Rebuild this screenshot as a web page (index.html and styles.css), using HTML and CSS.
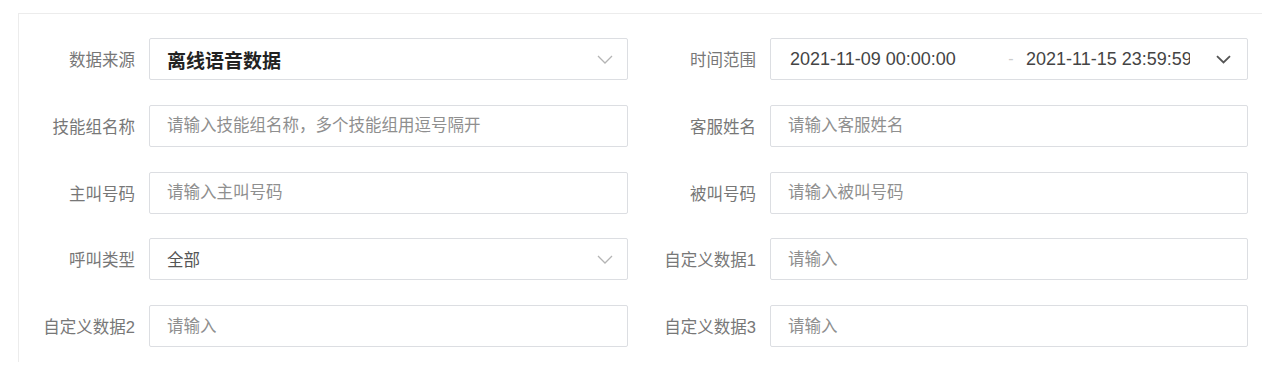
FILE: index.html
```html
<!doctype html>
<html lang="zh-CN">
<head>
	<meta charset="UTF-8">
	<title>查询条件</title>
	<link rel="stylesheet" href="styles.css">
</head>
<body>
	<div class="panel">
		<form class="search-form">
			<div class="form-item">
				<label class="form-label">数据来源</label>
				<div class="select">
					<span class="select-value">离线语音数据</span>
					<svg class="arrow" width="16" height="9" viewBox="0 0 16 9"><path d="M1 1l7 7 7-7" fill="none" stroke="#b4b4b4" stroke-width="1.3"/></svg>
				</div>
			</div>
			<div class="form-item">
				<label class="form-label">时间范围</label>
				<div class="select date-range">
					<span class="date-start">2021-11-09 00:00:00</span>
					<span class="date-sep">-</span>
					<span class="date-end">2021-11-15 23:59:59</span>
					<svg class="arrow arrow-dark" width="15" height="9" viewBox="0 0 15 9"><path d="M1 1.2l6.5 6.3 6.5-6.3" fill="none" stroke="#555" stroke-width="1.8"/></svg>
				</div>
			</div>
			<div class="form-item">
				<label class="form-label">技能组名称</label>
				<input class="input" type="text" placeholder="请输入技能组名称，多个技能组用逗号隔开">
			</div>
			<div class="form-item">
				<label class="form-label">客服姓名</label>
				<input class="input" type="text" placeholder="请输入客服姓名">
			</div>
			<div class="form-item">
				<label class="form-label">主叫号码</label>
				<input class="input" type="text" placeholder="请输入主叫号码">
			</div>
			<div class="form-item">
				<label class="form-label">被叫号码</label>
				<input class="input" type="text" placeholder="请输入被叫号码">
			</div>
			<div class="form-item">
				<label class="form-label">呼叫类型</label>
				<div class="select">
					<span class="select-text">全部</span>
					<svg class="arrow" width="16" height="9" viewBox="0 0 16 9"><path d="M1 1l7 7 7-7" fill="none" stroke="#b4b4b4" stroke-width="1.3"/></svg>
				</div>
			</div>
			<div class="form-item">
				<label class="form-label">自定义数据1</label>
				<input class="input" type="text" placeholder="请输入">
			</div>
			<div class="form-item">
				<label class="form-label">自定义数据2</label>
				<input class="input" type="text" placeholder="请输入">
			</div>
			<div class="form-item">
				<label class="form-label">自定义数据3</label>
				<input class="input" type="text" placeholder="请输入">
			</div>
		</form>
	</div>
</body>
</html>
```

FILE: styles.css
```css
body,html{margin: 0;padding: 0;background: #fff;}
body{font-family: "Liberation Sans", "Noto Sans CJK SC", sans-serif;color: #333;}
.panel{margin: 13px 0 0 18px;width: 1244px;height: 349px;border-top: 1px solid #ececec;border-left: 1px solid #ececec;box-sizing: border-box;}
.search-form{display: grid;grid-template-columns: 609px 608px;column-gap: 12px;row-gap: 24.75px;padding-top: 24px;}
.form-item{display: flex;align-items: center;height: 42px;}
.form-label{width: 130px;flex: none;box-sizing: border-box;padding-right: 14px;text-align: right;font-size: 16.5px;color: #777;white-space: nowrap;}
.input,.select{flex: 1;height: 42px;box-sizing: border-box;border: 1px solid #dcdee2;border-radius: 2px;background: #fff;font-family: inherit;font-size: 16.5px;color: #333;}
.input{padding: 0 17px;outline: none;}
.input::placeholder{color: #8f8f8f;}
.select{display: flex;align-items: center;padding: 0 14px 0 17px;}
.select-value{font-size: 19px;font-weight: bold;color: #222;}
.select-text{color: #555;}
.arrow{margin-left: auto;flex: none;}
.date-range{padding-left: 19px;font-size: 18px;color: #444;}
.date-start{width: 206px;flex: none;white-space: nowrap;}
.date-sep{width: 30px;flex: none;text-align: center;color: #ccc;font-size: 16px;}
.date-end{width: 164px;flex: none;overflow: hidden;white-space: nowrap;}
.arrow-dark{margin-right: 2px;}
```
